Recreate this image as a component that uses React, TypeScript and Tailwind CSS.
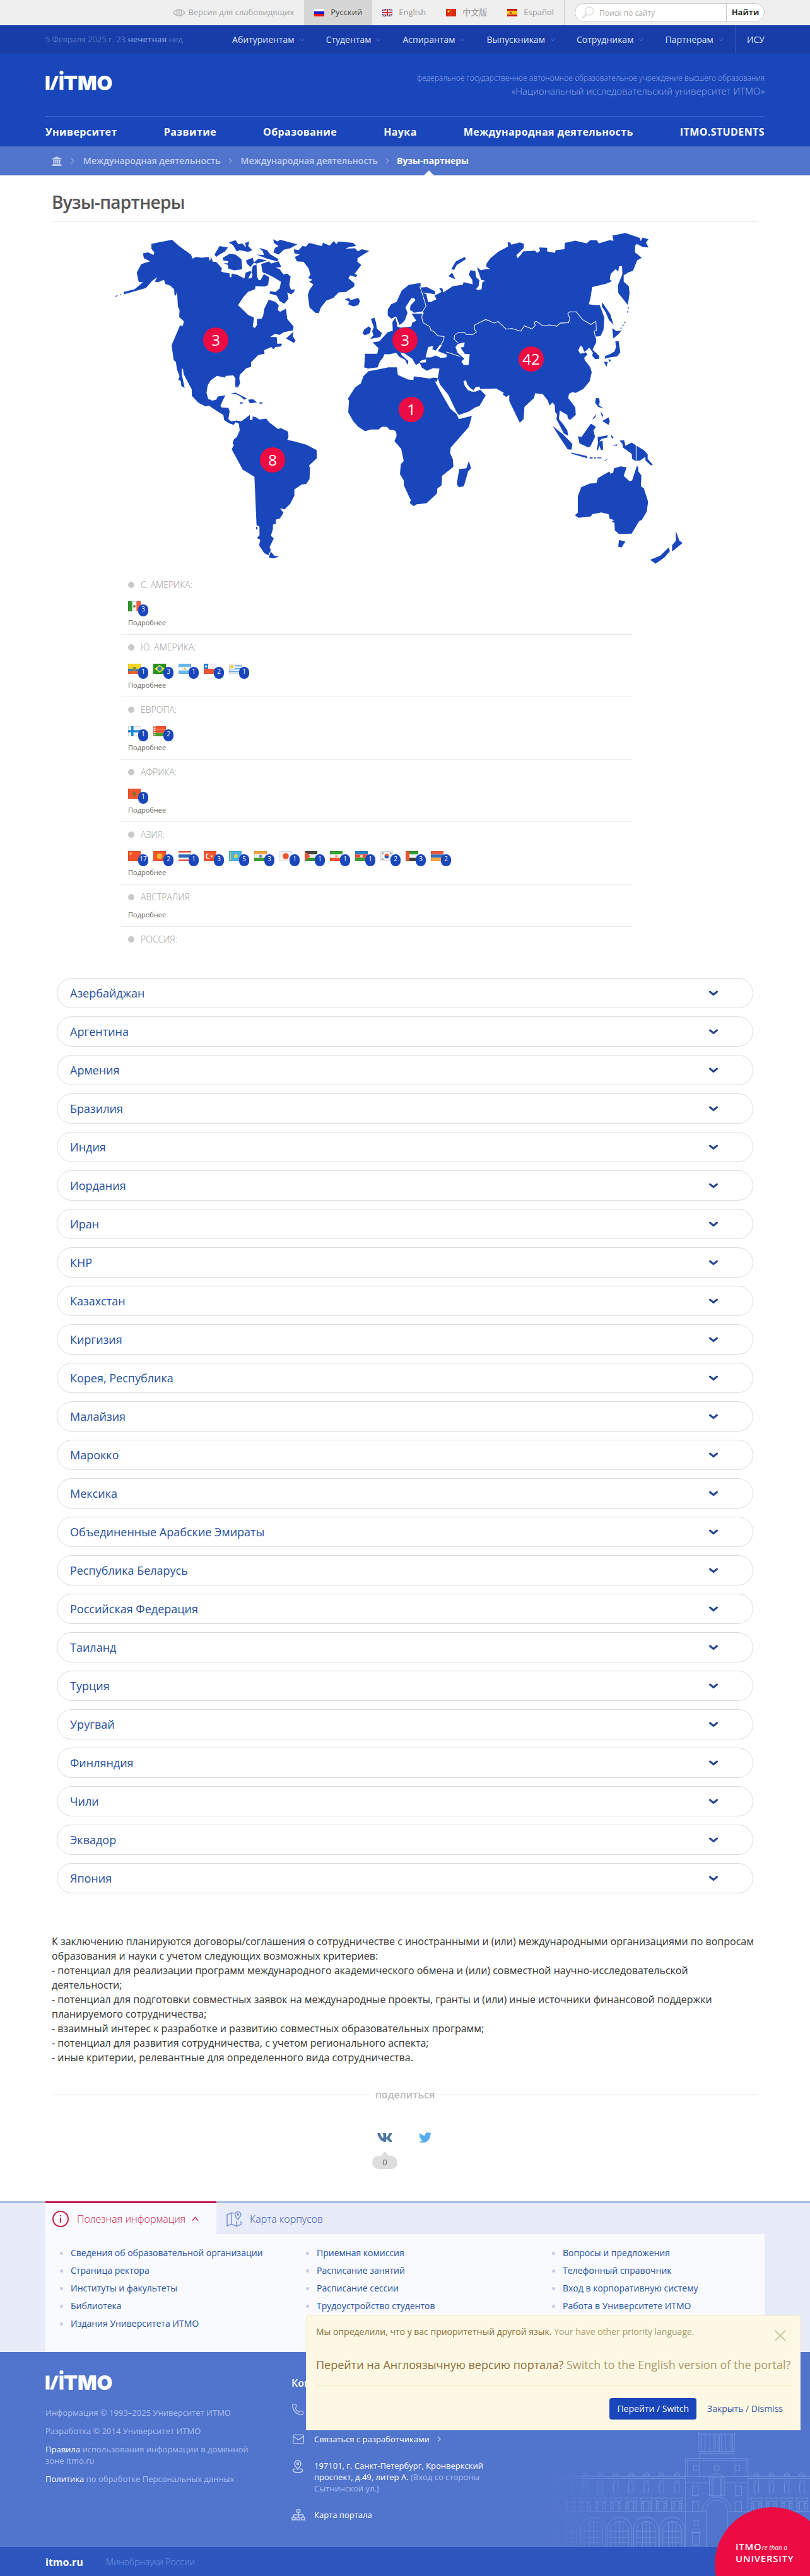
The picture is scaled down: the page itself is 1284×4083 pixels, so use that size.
import { ReactNode } from "react";
import { FaTwitter, FaVk } from "react-icons/fa";
import { Mail, Phone, X } from "lucide-react";

// Types
interface FlagProps {
  stripes: string[];
  vertical?: boolean;
  children?: ReactNode;
}

interface Partner {
  country: string;
  count: number;
  flag: ReactNode;
}

interface Region {
  name: string;
  partners: Partner[];
  more: boolean;
}

const Flag = ({ stripes, vertical, children }: FlagProps) => (
  <svg viewBox="0 0 20 16" className="h-4 w-5" aria-hidden="true">
    {stripes.map((color, i) =>
      vertical ? (
        <rect key={i} x={(20 / stripes.length) * i} y="0" width={20 / stripes.length} height="16" fill={color} />
      ) : (
        <rect key={i} x="0" y={(16 / stripes.length) * i} width="20" height={16 / stripes.length} fill={color} />
      )
    )}
    {children}
    <rect x="0.5" y="0.5" width="19" height="15" fill="none" stroke="#000" strokeOpacity="0.1" />
  </svg>
);

const regions: Region[] = [
  {
    name: "С. Америка:",
    more: true,
    partners: [
      { country: "Мексика", count: 3, flag: <Flag vertical stripes={["#2f9a2f", "#f2f2f2", "#f25c3c"]}><circle cx="10" cy="8" r="2" fill="#8a7a3a" /></Flag> },
    ],
  },
  {
    name: "Ю. Америка:",
    more: true,
    partners: [
      { country: "Эквадор", count: 1, flag: <Flag stripes={["#f9d923", "#f9d923", "#3e86b8", "#f0602c"]}><circle cx="10" cy="8" r="3" fill="#8d8b43" /></Flag> },
      { country: "Бразилия", count: 3, flag: <Flag stripes={["#23951d"]}><path d="M10 2 18 8 10 14 2 8Z" fill="#f2e24a" /><circle cx="10" cy="8" r="3.4" fill="#2d7cb5" /></Flag> },
      { country: "Аргентина", count: 1, flag: <Flag stripes={["#6bb8f0", "#f4f4f4", "#6bb8f0"]}><circle cx="10" cy="8" r="1.8" fill="#e8c75a" /></Flag> },
      { country: "Чили", count: 2, flag: <Flag stripes={["#f1f1f1", "#ee5535"]}><rect width="7" height="8" fill="#2a7fd0" /><circle cx="3.5" cy="4" r="1.5" fill="#fff" /></Flag> },
      { country: "Уругвай", count: 1, flag: <Flag stripes={["#f4f4f4", "#62aee8", "#f4f4f4", "#62aee8", "#f4f4f4", "#62aee8", "#f4f4f4"]}><rect width="9" height="8" fill="#f4f4f4" /><circle cx="4.5" cy="4.5" r="2.8" fill="#f1cf45" /></Flag> },
    ],
  },
  {
    name: "Европа:",
    more: true,
    partners: [
      { country: "Финляндия", count: 1, flag: <Flag stripes={["#f2f4f6"]}><path d="M5 0h3.500v16h-3.500zM0 6.200h20v3.500h-20z" fill="#1d86d2" /></Flag> },
      { country: "Республика Беларусь", count: 2, flag: <Flag stripes={["#f4522f", "#f4522f", "#4f9e2b"]}><path d="M2 0v16" stroke="#f6c9bd" strokeWidth="3" strokeDasharray="2 1" /></Flag> },
    ],
  },
  {
    name: "Африка:",
    more: true,
    partners: [
      { country: "Марокко", count: 1, flag: <Flag stripes={["#f2562e"]}><path d="M10 4.500 12 11 7 7.200h6L8 11Z" fill="none" stroke="#5f7a2a" /></Flag> },
    ],
  },
  {
    name: "Азия:",
    more: true,
    partners: [
      { country: "КНР", count: 17, flag: <Flag stripes={["#f1542c"]}><circle cx="4" cy="4" r="2" fill="#f8b53a" /></Flag> },
      { country: "Киргизия", count: 2, flag: <Flag stripes={["#f1542c"]}><circle cx="10" cy="8" r="4.500" fill="#f7b733" /></Flag> },
      { country: "Таиланд", count: 1, flag: <Flag stripes={["#ee5a3c", "#f2f2f2", "#2c68b5", "#2c68b5", "#f2f2f2", "#ee5a3c"]} /> },
      { country: "Турция", count: 3, flag: <Flag stripes={["#f1542c"]}><circle cx="7" cy="8" r="4" fill="#fff" /><circle cx="8.200" cy="8" r="3.200" fill="#f1542c" /><circle cx="12.500" cy="8" r="1.500" fill="#fff" /></Flag> },
      { country: "Казахстан", count: 5, flag: <Flag stripes={["#4fb2e6"]}><circle cx="11" cy="8" r="3" fill="#d9d64a" /><path d="M2.500 1v14" stroke="#d9d64a" /></Flag> },
      { country: "Индия", count: 3, flag: <Flag stripes={["#f5a742", "#f4f4f4", "#3d9e2e"]}><circle cx="10" cy="8" r="2.200" fill="#4a86b8" /></Flag> },
      { country: "Япония", count: 1, flag: <Flag stripes={["#f3f3f3"]}><circle cx="10" cy="8" r="4.800" fill="#f1542c" /></Flag> },
      { country: "Иордания", count: 1, flag: <Flag stripes={["#444444", "#f1f1f1", "#2f9a2f"]}><path d="M0 0 9 8 0 16Z" fill="#ee5535" /></Flag> },
      { country: "Иран", count: 1, flag: <Flag stripes={["#38a035", "#f4f4f4", "#ee5535"]}><circle cx="10" cy="8" r="1.800" fill="#ee8a70" /></Flag> },
      { country: "Азербайджан", count: 1, flag: <Flag stripes={["#2b80c4", "#ec4c37", "#3f9f35"]}><circle cx="10" cy="8" r="2.200" fill="#f6dcd6" /></Flag> },
      { country: "Корея, Республика", count: 2, flag: <Flag stripes={["#f1f1f1"]}><path d="M6.500 8a3.500 3.500 0 0 1 7 0Z" fill="#ee5535" /><path d="M6.500 8a3.500 3.500 0 0 0 7 0Z" fill="#2f62a8" /><path d="M2.500 4.500 4.500 2.500M15.500 2.500 17.500 4.500M2.500 11.500 4.500 13.500M15.500 13.500 17.500 11.500" stroke="#666" strokeWidth="1.500" /></Flag> },
      { country: "ОАЭ", count: 3, flag: <Flag stripes={["#2f9a2f", "#f3f3f3", "#444444"]}><rect width="6" height="16" fill="#ee5535" /></Flag> },
      { country: "Армения", count: 2, flag: <Flag stripes={["#ee5a3c", "#3a6fba", "#f5a742"]} /> },
    ],
  },
  { name: "Австралия:", more: true, partners: [] },
  { name: "Россия:", more: false, partners: [] },
];

const countries = [
  "Азербайджан", "Аргентина", "Армения", "Бразилия", "Индия", "Иордания", "Иран", "КНР",
  "Казахстан", "Киргизия", "Корея, Республика", "Малайзия", "Марокко", "Мексика",
  "Объединенные Арабские Эмираты", "Республика Беларусь", "Российская Федерация", "Таиланд",
  "Турция", "Уругвай", "Финляндия", "Чили", "Эквадор", "Япония",
];

const audiences = ["Абитуриентам", "Студентам", "Аспирантам", "Выпускникам", "Сотрудникам", "Партнерам"];

const mainMenu = ["Университет", "Развитие", "Образование", "Наука", "Международная деятельность", "ITMO.STUDENTS"];

const usefulLinks = [
  ["Сведения об образовательной организации", "Страница ректора", "Институты и факультеты", "Библиотека", "Издания Университета ИТМО"],
  ["Приемная комиссия", "Расписание занятий", "Расписание сессии", "Трудоустройство студентов"],
  ["Вопросы и предложения", "Телефонный справочник", "Вход в корпоративную систему", "Работа в Университете ИТМО"],
];

const markers = [
  { count: 3, place: "left-[160px] top-[168px]" },
  { count: 8, place: "left-[250px] top-[358px]" },
  { count: 3, place: "left-[460px] top-[168px]" },
  { count: 1, place: "left-[470px] top-[278px]" },
  { count: 42, place: "left-[660px] top-[198px]" },
];

const languages = [
  { name: "Русский", active: true, flag: <FlagRu /> },
  { name: "English", active: false, flag: <FlagEn /> },
  { name: "中文版", active: false, flag: <FlagCn /> },
  { name: "Español", active: false, flag: <FlagEs /> },
];

function FlagRu() {
  return (
    <svg viewBox="0 0 16 12" className="h-3 w-4" aria-hidden="true">
      <rect width="16" height="4" fill="#fff" />
      <rect y="4" width="16" height="4" fill="#1a17c4" />
      <rect y="8" width="16" height="4" fill="#ec1010" />
    </svg>
  );
}

function FlagEn() {
  return (
    <svg viewBox="0 0 16 12" className="h-3 w-4" aria-hidden="true">
      <rect width="16" height="12" fill="#2b3f92" />
      <path d="M0 0 16 12M16 0 0 12" stroke="#f0e6ee" strokeWidth="2.500" />
      <path d="M0 0 16 12M16 0 0 12" stroke="#d3343f" strokeWidth="1" />
      <path d="M8 0v12M0 6h16" stroke="#f5eef2" strokeWidth="4" />
      <path d="M8 0v12M0 6h16" stroke="#d3343f" strokeWidth="2.200" />
    </svg>
  );
}

function FlagCn() {
  return (
    <svg viewBox="0 0 16 12" className="h-3 w-4" aria-hidden="true">
      <rect width="16" height="12" fill="#dd2a12" />
      <circle cx="4" cy="4" r="1.800" fill="#f8d02c" />
      <path d="M7.500 1.500v1M9 3.500v1M9 6v1M7.500 8v1" stroke="#f8d02c" />
    </svg>
  );
}

function FlagEs() {
  return (
    <svg viewBox="0 0 16 12" className="h-3 w-4" aria-hidden="true">
      <rect width="16" height="12" fill="#c81a1a" />
      <rect y="3" width="16" height="6" fill="#fbc60a" />
      <rect x="4" y="4.500" width="3" height="3.500" fill="#b5542a" />
    </svg>
  );
}

const Logo = () => (
  <svg viewBox="0 -8 130 50" className="-mb-[11px] -mt-2 h-[50px] w-[130px]" fill="#fff" role="img" aria-label="ИТМО">
    <rect x="0.500" y="8.500" width="6" height="22" />
    <path d="M15.500 8.500h5.500l-8.500 22h-5.500z" />
    <rect x="22.500" y="8.500" width="6" height="22" />
    <circle cx="25.500" cy="3.200" r="3.100" />
    <text x="29" y="30.500" fontFamily="Inter, sans-serif" fontWeight="900" fontSize="32">TMO</text>
  </svg>
);

const Chevron = ({ className, d = "M1 1 5 6 9 1" }: { className: string; d?: string }) => (
  <svg viewBox="0 0 10 7" className={className} fill="none" stroke="currentColor" strokeWidth="1.200" aria-hidden="true">
    <path d={d} />
  </svg>
);

const ChevronRight = ({ className }: { className: string }) => (
  <svg viewBox="0 0 6 10" className={className} fill="none" stroke="currentColor" strokeWidth="1.200" aria-hidden="true">
    <path d="M1 1 5 5 1 9" />
  </svg>
);

// World map. Land is drawn on a 3 x 2.8 times finer grid, the eastern half is shifted by 1380 units.
const WorldMap = () => (
  <svg viewBox="2 1 960 556" className="h-[556px] w-[960px]" aria-hidden="true">
    <g transform="scale(0.33333 0.35714)" fill="#1946ba">
      {/* Americas */}
      <path d="M240 102 338 84 372 112 428 150 436 168 452 160 480 164 512 160 518 180 524 160 532 182 548 182 575 210 572 226 612 234 612 250 620 250 622 234 650 240 682 256 688 230 712 222 714 232 700 256 716 254 724 228 745 252 750 264 760 262 775 236 800 250 795 285 778 292 735 290 732 304 700 315 680 335 652 374 672 392 700 418 728 430 722 470 732 476 742 462 742 436 764 434 772 420 776 392 798 350 830 360 846 375 840 395 852 404 880 390 886 436 916 468 914 486 870 494 850 506 826 502 805 516 836 516 838 545 862 545 855 558 830 560 820 570 810 560 776 574 778 590 748 596 714 628 714 648 692 654 660 684 658 700 662 722 650 740 640 738 638 720 640 700 630 686 594 688 590 696 552 688 522 708 508 730 502 762 510 790 530 798 548 794 556 780 592 774 578 800 568 822 574 828 606 830 612 845 606 880 618 890 645 886 668 890 708 862 708 884 720 884 722 868 738 872 754 882 786 878 800 894 842 924 856 920 890 936 892 958 886 972 916 978 978 994 1026 1018 1026 1054 990 1086 994 1098 992 1146 976 1168 956 1170 920 1192 920 1220 900 1256 874 1280 852 1276 868 1296 852 1320 832 1326 832 1344 818 1348 818 1368 808 1398 822 1410 802 1448 808 1462 796 1484 776 1474 752 1440 758 1416 742 1408 754 1396 754 1358 740 1350 730 1136 674 1104 622 1014 632 994 626 988 632 970 646 960 660 930 656 900 640 894 632 906 608 898 586 884 582 862 545 840 512 820 498 824 464 808 432 776 432 748 394 682 390 656 384 658 384 678 398 742 382 732 380 712 368 704 374 690 362 660 356 626 346 618 336 552 376 464 390 466 394 446 372 426 374 396 366 380 362 316 356 332 350 330 348 304 330 288 306 280 300 262 272 272 256 270 268 250 244 266 214 298 110 326 108 316 160 304 200 272 180 272 170 230 192 192 234 180 204 166 200 144 225 140 250 152 254 140 240 124Z" />
      {/* Canadian islands, Newfoundland */}
      <path d="M580 164 612 146 640 150 668 170 672 215 634 220 606 212 604 196 584 188 604 188 606 180 582 176ZM540 150 564 112 604 118 590 136 560 152 548 160ZM608 96 640 86 654 104 672 100 690 118 686 98 706 92 700 112 720 130 700 138 660 130 646 136 628 108ZM820 82 840 92 852 84 934 104 900 122 870 128 845 150 820 140 828 120 845 112 822 98ZM752 120 790 130 804 148 845 170 838 180 790 168 740 150 775 152 770 135ZM690 176 722 164 728 186 710 205 694 190ZM726 186 748 168 790 176 740 190ZM722 200 740 194 742 250 715 232ZM762 192 800 180 808 190 845 180 858 205 830 208 850 215 868 238 885 234 902 248 896 285 904 306 922 304 918 316 905 326 886 318 892 346 872 368 850 356 836 332 800 322 806 312 830 316 850 300 856 270 820 250 790 236 768 228ZM880 522 916 492 912 512 926 532 918 542Z" />
      {/* Greenland and Iceland */}
      <path d="M918 126 940 130 958 112 975 114 990 98 1050 112 1056 97 1088 110 1106 90 1120 102 1130 92 1200 98 1214 112 1180 116 1162 124 1208 122 1222 136 1240 126 1276 134 1220 166 1220 182 1238 196 1206 236 1220 240 1212 250 1186 242 1176 254 1206 278 1204 292 1166 316 1130 318 1105 342 1072 354 1046 384 1036 410 1020 408 992 384 984 330 990 310 1010 282 990 270 1006 262 986 254 996 238 988 212 964 182 932 180 922 160 946 150 920 144ZM1160 348 1180 342 1186 352 1224 342 1232 356 1224 374 1200 380 1175 370 1182 360Z" />
      {/* Caribbean, Aleutian and southern islands */}
      <path d="M614 768 640 762 694 788 680 794 668 782 640 768ZM700 794 724 792 742 806 708 810ZM660 806h14v5h-14ZM754 806h14v5h-14ZM68 334 84 328 70 338ZM90 326h8v3h-8ZM808 1468 824 1486 848 1490 820 1498 798 1494ZM738 1358h6v12h-6Z" />
      {/* British Isles */}
      <path d="M1284 436 1300 430 1308 450 1312 478 1336 498 1328 516 1280 524 1296 508 1290 490 1298 472ZM1244 500 1252 482 1274 468 1284 478 1280 498 1256 508Z" />
      <g transform="translate(1380 0)">
        {/* Eurasia */}
        <path d="M140 276 140 296 170 294 208 312 210 326 150 318 168 326 175 360 190 360 216 348 206 332 240 316 228 298 244 300 248 318 294 290 340 284 345 272 388 282 386 262 370 240 376 220 400 222 404 250 420 264 416 290 404 302 412 308 430 304 434 272 448 266 428 262 408 206 428 220 450 214 472 214 452 202 454 190 472 166 512 136 556 114 554 96 566 96 572 106 612 96 632 102 630 122 596 152 600 166 612 156 628 136 684 132 694 142 708 134 704 118 742 120 742 136 780 142 782 130 824 126 826 98 876 88 930 100 946 86 978 86 988 100 1038 86 1058 88 1052 66 1114 54 1184 76 1186 90 1196 74 1224 82 1212 96 1224 118 1196 116 1168 102 1160 112 1160 140 1192 164 1170 176 1150 222 1130 228 1106 242 1106 270 1130 290 1134 320 1126 374 1080 320 1078 288 1100 236 1098 200 1084 202 1080 226 1068 214 1044 236 1040 260 1050 268 1020 280 956 294 948 344 940 370 966 374 992 374 1014 430 1010 484 996 512 974 514 975 540 958 572 990 600 990 612 970 614 956 598 960 586 942 562 930 575 918 582 910 560 900 554 890 576 900 590 926 584 934 592 918 608 922 620 946 648 954 672 944 712 914 746 878 764 862 760 846 768 842 786 876 828 878 862 850 884 840 876 838 862 802 842 798 880 820 905 838 930 842 954 822 944 800 905 786 880 790 860 780 848 778 818 768 806 754 820 744 796 720 768 684 766 680 786 634 826 630 880 612 896 562 800 562 772 548 782 530 770 536 764 500 744 424 746 420 736 402 738 392 752 376 742 362 726 356 708 344 712 350 732 366 752 384 758 402 758 424 750 450 774 420 822 400 828 370 846 322 862 312 850 272 772 232 726 222 696 230 656 200 654 170 666 146 652 136 630 166 628 166 614 136 622 140 628 118 640 100 612 66 590 44 584 50 596 82 622 78 640 66 616 40 604 24 586 -8 592 -32 592 -38 606 -54 625 -64 650 -110 656 -128 650 -124 590 -66 590 -60 565 -88 540 -56 535 -16 494 8 488 6 450 20 430 26 450 30 470 44 474 96 470 100 452 120 444 98 412 156 412 150 402 110 408 90 395 92 376 116 352 108 342 96 344 68 384 78 408 66 440 52 455 40 462 24 425 0 434 -16 420 -16 394 0 370 26 360 50 310 84 284Z" />
        {/* Africa and Madagascar */}
        <path d="M222 698 200 696 184 700 108 690 106 706 80 704 32 684 28 650 -14 650 -64 660 -108 668 -132 690 -144 722 -172 740 -206 790 -200 798 -204 850 -180 890 -156 914 -124 934 -96 926 -60 926 -44 914 -20 914 -6 928 12 928 24 936 26 955 16 978 48 1012 60 1066 46 1080 42 1124 60 1152 60 1172 86 1226 94 1240 88 1252 108 1266 122 1258 168 1254 218 1210 220 1188 240 1174 242 1132 296 1092 294 1060 280 1030 284 1006 370 914 384 866 322 880 312 858 280 832 236 760 208 712 218 714ZM370 1066 380 1098 366 1112 346 1178 322 1182 312 1168 324 1102 358 1098Z" />
        {/* Arctic islands, Sakhalin, Japan */}
        <path d="M350 160 356 170 312 196 300 218 286 214 308 180ZM272 246 290 230 306 260ZM1004 362 1042 414 1058 462 1036 440 1020 405 1002 380ZM1052 476 1072 490 1096 486 1080 504 1056 522ZM1066 534 1082 534 1090 584 1074 602 1040 606 1016 612 1018 600 1044 590 1062 580 1070 560ZM1012 626 1030 626 1024 648ZM1034 614 1046 618 1036 628Z" />
        <path d="M1128 384 1124 412M1114 448 1092 480" fill="none" stroke="#1946ba" strokeWidth="4" strokeDasharray="8 8" />
        {/* South-East Asia */}
        <path d="M974 786 990 788 992 806 988 818 1010 832 985 826 970 808ZM996 848 1008 860 1004 874ZM956 882 976 856 970 874ZM1004 888 1034 872 1040 890 1034 906ZM768 910 820 950 862 990 858 1016 840 1014 800 958ZM856 1028 930 1044 934 1054 860 1034ZM1008 1066 1036 1054 1020 1064ZM944 1050h14v5h-14ZM966 1050h8v5h-8ZM980 1050h20v4h-20ZM888 956 905 960 950 900 974 914 962 930 970 958 948 1000 938 1006 896 988ZM982 960 1030 952 1028 962 1000 968 990 980 1006 976 1008 1016 998 1018 990 996 984 1018 978 1016 984 985ZM1044 948 1058 962 1050 966ZM1050 996 1076 992 1074 998ZM1086 976 1108 974 1114 998 1144 984 1164 996 1202 1018 1220 1036 1220 1056 1244 1082 1236 1086 1210 1064 1208 1048 1184 1064 1162 1066 1146 1056 1144 1034 1102 1006 1100 990Z" />
        {/* Australia and New Zealand */}
        <path d="M888 1222 904 1182 944 1166 976 1164 984 1142 1038 1112 1042 1122 1056 1118 1060 1098 1090 1090 1120 1094 1106 1132 1134 1156 1146 1152 1168 1090 1174 1090 1176 1112 1190 1130 1188 1178 1202 1188 1222 1246 1216 1290 1192 1328 1180 1332 1144 1388 1084 1390 1064 1374 1062 1340 1048 1336 1060 1328 1040 1322 1034 1302 1000 1294 956 1302 950 1312 890 1318 874 1306 888 1296ZM1084 1416 1114 1424 1096 1450 1080 1446ZM1354 1376 1370 1418 1386 1430 1336 1468 1336 1440 1354 1420ZM1320 1450 1326 1466 1300 1494 1258 1522 1232 1504 1280 1486Z" />
        {/* Inner seas */}
        <path fill="#fff" d="M164 606 176 560 200 556 196 570 212 576 232 550 242 552 222 578 266 594 262 606 236 608 212 598 190 606ZM306 560 318 546 350 540 346 560 330 562 350 590 374 592 368 640 345 640 334 625 348 612 316 585Z" />
        {/* Russian border */}
        <path
          fill="none"
          stroke="#fff"
          strokeWidth="3"
          d="M136 290 146 318 166 378 150 402 146 430 152 452 184 470 190 488 202 490 222 510 252 514 250 530 236 550M262 582 328 602M318 542 300 526 302 508 322 494 350 496 356 504 386 506 406 494 396 480 398 462 450 438 492 454 508 446 546 480 576 478 616 490 634 466 670 480 686 464 680 450 690 446 722 466 752 462 788 468 804 454 844 452 850 432 840 412 848 404 880 404 910 438 950 460 974 446 976 486 966 490 972 520M1165 994V1068"
        />
      </g>
    </g>
  </svg>
);

// Line drawing of the university building behind the footer
const Building = () => (
  <svg viewBox="218 382 424 184" className="absolute bottom-0 right-0 h-[184px] w-[424px]" aria-hidden="true">
    <defs>
      <linearGradient id="fade" x1="0" x2="1" y1="0" y2="0">
        <stop offset="0" stopColor="#fff" stopOpacity="0" />
        <stop offset="0.350" stopColor="#fff" stopOpacity="1" />
      </linearGradient>
      <mask id="fadeMask" maskUnits="userSpaceOnUse" x="218" y="382" width="424" height="184">
        <rect x="218" y="382" width="424" height="184" fill="url(#fade)" />
      </mask>
    </defs>
    <g mask="url(#fadeMask)">
      <g transform="scale(0.4095 0.391)" fill="none" stroke="#7592de" strokeWidth="2.200">
        <path d="M1138 977V1060M1275 977V1060M1136 990H1277M1136 1060H1277M1138 1068H1275M1140 1068V1088M1274 1068V1088M1148 990V1060M1162 990V1060M1180 990V1060M1196 990V1060M1202 990V1060M1212 990V1060M1218 990V1060M1226 990V1060M1240 990V1060M1262 990V1060M1268 990V1060" />
        <path d="M1085 1448V1088H1328V1300M1085 1096H1328M1094 1096V1160M1320 1096V1160M1140 1096V1160M1274 1096V1160M1085 1162H1328M1085 1187H1178M1236 1187H1328M1178 1240V1162L1206 1148 1236 1162V1240ZM1178 1166H1236M1188 1168V1240M1226 1168V1240M1192 1168V1240M1222 1168V1240" />
        <path d="M1117 1116h18v22h-18ZM1198 1116h18v20h-18ZM1278 1116h18v22h-18ZM1112 1200h23v40h-23ZM1278 1200h25v40h-25ZM1112 1262h23v42h-23ZM1278 1262h25v42h-25ZM1119 1338h16v24h-16ZM1112 1390h28v50h-28ZM1106 1388C1106 1370 1146 1370 1146 1388Z" />
        <path d="M1166 1448V1302C1166 1244 1248 1244 1248 1302V1448M1152 1302C1152 1226 1262 1226 1262 1302M1085 1304H1166M1248 1304H1570M540 1304H1085M540 1162H1085M540 1170H1085M1328 1162H1570M1328 1170H1570" />
        {[580, 639, 697, 756, 816, 875, 934, 993, 1052, 1360, 1419, 1478, 1537].map((x) => (
          <g key={x} transform={`translate(${x} 0)`}>
            <path d="M-9 1162V1152C-9 1146 9 1146 9 1152V1162M-12 1156H12M-9 1229V1188H9V1229ZM-12 1184C-6 1178 6 1178 12 1184" />
            <path d="M-24 1248H-10L0 1254 10 1248H24L18 1262H-18ZM-10 1262V1298H10V1262M-20 1262V1302H-10M20 1262V1302H10M-20 1272h10M-20 1282h10M-20 1292h10M10 1272h10M10 1282h10M10 1292h10" />
          </g>
        ))}
        {[630, 729, 830, 933, 1034].map((x) => (
          <g key={x} transform={`translate(${x} 0)`}>
            <path d="M-48 1448V1378C-48 1310 48 1310 48 1378V1448M-36 1448V1384C-36 1330 36 1330 36 1384V1448M-36 1384H36M-36 1410H36M-36 1428H36M-14 1348V1448M14 1348V1448M0 1344V1448" />
          </g>
        ))}
      </g>
    </g>
  </svg>
);

export default function App() {
  return (
    <div className="relative overflow-hidden bg-white font-['Open_Sans','Noto_Sans_CJK_SC',sans-serif] text-[#333]">
      {/* Language and search bar */}
      <div className="bg-[#efefef] text-[13px]">
        <div className="mx-auto flex h-10 max-w-[1170px] items-center justify-end px-[15px]">
          <a href="#" className="mr-4 flex items-center gap-1 text-[#a3a3a3]">
            <svg viewBox="0 0 20 12" className="h-3 w-5" fill="none" stroke="#bbb" strokeWidth="1.500" aria-hidden="true">
              <path d="M1 6C5-.5 15-.5 19 6 15 12.500 5 12.500 1 6Z" />
              <circle cx="10" cy="6" r="4" />
              <circle cx="10" cy="6" r="1" fill="#bbb" />
            </svg>
            Версия для слабовидящих
          </a>
          {languages.map((lang) => (
            <a
              key={lang.name}
              href="#"
              className={`flex h-10 items-center gap-2.5 px-4 ${lang.active ? "bg-[#d6d6d6] text-[#444]" : "text-[#999]"}`}
            >
              {lang.flag}
              {lang.name}
            </a>
          ))}
          <form className="flex h-10 items-center border-l border-[#ccc] pl-4">
            <div className="flex h-[30px] items-center rounded-full border border-[#ccc] bg-white">
              <svg viewBox="0 0 20 20" className="ml-[10px] h-5 w-5" fill="none" stroke="#ddd" strokeWidth="1.500" aria-hidden="true">
                <circle cx="12" cy="7.500" r="6.500" />
                <path d="M7.500 12.500 1 19" strokeWidth="2.500" />
              </svg>
              <input
                type="text"
                aria-label="Поиск по сайту"
                placeholder="Поиск по сайту"
                className="h-7 w-[209px] bg-transparent px-2 text-xs outline-none placeholder:text-[#aaa]"
              />
              <button type="submit" className="h-7 w-[60px] border-l border-[#ccc] text-[13px] font-bold text-[#333]">
                Найти
              </button>
            </div>
          </form>
        </div>
      </div>

      {/* Audience menu */}
      <div className="bg-[#183da8]">
        <div className="mx-auto flex h-[45px] max-w-[1170px] items-center justify-between px-[15px]">
          <span className="text-[13px] font-light text-[#7c96dd]">
            5 Февраля 2025 г. 23 <b className="font-semibold">нечетная</b> нед.
          </span>
          <nav className="flex items-center gap-[34px] text-sm text-[#dbe4fa]">
            {audiences.map((item) => (
              <a key={item} href="#" className="flex items-center gap-2">
                {item}
                <Chevron className="h-1.5 w-2 text-[#4a6cc9]" />
              </a>
            ))}
            <a href="#" className="-ml-4 flex h-[45px] items-center border-l border-[#3558bb] pl-[18px]">
              ИСУ
            </a>
          </nav>
        </div>
      </div>

      {/* Header */}
      <header className="bg-[#1946ba]">
        <div className="mx-auto max-w-[1170px] px-[15px]">
          <div className="flex h-[99px] items-start justify-between pt-[27px]">
            <a href="#">
              <Logo />
            </a>
            <p className="text-right text-[15px] font-light leading-5 text-[#93abe9]">
              <span className="text-xs leading-5">федеральное государственное автономное образовательное учреждение высшего образования</span>
              <br />
              «Национальный исследовательский университет ИТМО»
            </p>
          </div>
          <nav className="flex h-12 items-center justify-between border-t border-[#3a62cb] text-base font-bold tracking-wide text-white">
            {mainMenu.map((item) => (
              <a key={item} href="#">
                {item}
              </a>
            ))}
          </nav>
        </div>
      </header>

      {/* Breadcrumbs */}
      <nav className="bg-[#5174cc]">
        <div className="mx-auto flex h-[46px] max-w-[1170px] items-center px-[25px] text-sm font-semibold text-[#c3d1f6]">
          <a href="#" aria-label="Главная">
            <svg viewBox="0 0 16 15" className="h-[15px] w-4" fill="currentColor" aria-hidden="true">
              <path d="M8 0 15.500 3.500V4.500H.500V3.500ZM2 5.500H14V6.500H2ZM2.500 6.500H4.500V11.500H2.500ZM5.500 6.500H7.500V11.500H5.500ZM8.500 6.500H10.500V11.500H8.500ZM11.500 6.500H13.500V11.500H11.500ZM1.500 12H14.500V13H1.500ZM.500 13.500H15.500V15H.500Z" />
            </svg>
          </a>
          <ChevronRight className="mx-[14px] h-2.5 w-1.5 text-[#8fa7e2]" />
          <a href="#">Международная деятельность</a>
          <ChevronRight className="mx-[13px] h-2.5 w-1.5 text-[#8fa7e2]" />
          <a href="#">Международная деятельность</a>
          <ChevronRight className="mx-[12px] h-2.5 w-1.5 text-[#8fa7e2]" />
          <span className="relative flex h-[46px] items-center font-bold text-white">
            Вузы-партнеры
            <svg viewBox="0 0 16 8" className="absolute bottom-0 left-[43px] h-2 w-4" fill="#fff" aria-hidden="true">
              <path d="M0 8 8 0 16 8Z" />
            </svg>
          </span>
        </div>
      </nav>

      <main className="mx-auto max-w-[1170px] px-[25px]">
        <h1 className="flex h-[73px] items-center border-b border-[#ddd] pt-3 text-[28px] font-semibold tracking-tight text-[#555]">
          Вузы-партнеры
        </h1>

        {/* Map */}
        <div className="relative mx-auto h-[556px] w-[960px]">
          <WorldMap />
          {markers.map((marker) => (
            <button
              key={marker.place}
              type="button"
              className={`absolute flex size-10 items-center justify-center rounded-full bg-[#ec0b43] text-2xl text-white ${marker.place}`}
            >
              {marker.count}
            </button>
          ))}
        </div>

        {/* Regions */}
        <div className="mb-[51px] ml-[110px] mr-[200px]">
          {regions.map((region) => (
            <section key={region.name} className="border-b border-[#e9e9e9] px-[11px] pt-2.5 last:border-b-0">
              <h2 className="flex h-5 items-center gap-[10px] text-sm font-light uppercase text-[#999]">
                <i className="block size-2.5 rounded-full bg-[#c9c9c9]" />
                {region.name}
              </h2>
              {region.partners.length > 0 && (
                <ul className="mt-4 flex h-4 gap-5">
                  {region.partners.map((partner) => (
                    <li key={partner.country} className="relative w-5" title={partner.country}>
                      {partner.flag}
                      <span className="absolute left-4 top-[5px] flex h-[19px] w-4 items-center justify-center rounded-full bg-[#1946ba] pb-1 text-[10px] text-white">
                        {partner.count}
                      </span>
                    </li>
                  ))}
                </ul>
              )}
              {region.more && (
                <a href="#" className="mt-2.5 block pb-2.5 text-[11px] leading-4 text-[#666]">
                  Подробнее
                </a>
              )}
            </section>
          ))}
        </div>

        {/* Countries */}
        <div className="mb-[65px] flex flex-col gap-[13px] px-2">
          {countries.map((country) => (
            <button
              key={country}
              type="button"
              className="flex h-12 items-center justify-between rounded-full border border-[#d9dcde] pl-5 pr-[55px] text-lg text-[#274f9e]"
            >
              {country}
              <svg viewBox="0 0 14 9" className="h-[9px] w-3.5" fill="none" stroke="#274690" strokeWidth="3" strokeLinecap="round" aria-hidden="true">
                <path d="M1.500 2 7 6.500 12.500 2" />
              </svg>
            </button>
          ))}
        </div>

        <p className="text-base leading-[23px]">
          К заключению планируются договоры/соглашения о сотрудничестве с иностранными и (или) международными организациями по вопросам образования и науки с учетом следующих возможных критериев:
          <br />- потенциал для реализации программ международного академического обмена и (или) совместной научно-исследовательской деятельности;
          <br />- потенциал для подготовки совместных заявок на международные проекты, гранты и (или) иные источники финансовой поддержки планируемого сотрудничества;
          <br />- взаимный интерес к разработке и развитию совместных образовательных программ;
          <br />- потенциал для развития сотрудничества, с учетом регионального аспекта;
          <br />- иные критерии, релевантные для определенного вида сотрудничества.
        </p>

        {/* Share */}
        <div className="mt-[35px] flex h-6 items-center gap-2 font-semibold text-[#bbb]">
          <span className="h-px flex-1 bg-[#ddd]" />
          поделиться
          <span className="h-px flex-1 bg-[#ddd]" />
        </div>
        <div className="mb-[51px] mt-[46px] flex justify-center">
          <a href="#" aria-label="ВКонтакте" className="flex w-16 flex-col items-center text-[#4d75a3]">
            <FaVk className="size-5 scale-125" />
            <svg viewBox="0 0 40 7" className="mt-3 h-[7px] w-10" fill="#ddd" aria-hidden="true">
              <path d="M14 7 20 0 26 7Z" />
            </svg>
            <span className="flex h-[21px] w-10 items-center justify-center rounded-full bg-[#ddd] text-[13px] text-[#666]">0</span>
          </a>
          <a href="#" aria-label="Twitter" className="flex w-16 justify-center text-[#55acee]">
            <FaTwitter className="size-5" />
          </a>
        </div>
      </main>

      {/* Useful information */}
      <section className="border-t-[3px] border-[#a9bce0] bg-[#e8ecf8]">
        <div className="mx-auto max-w-[1170px] px-[15px]">
          <div className="flex h-[49px] text-base">
            <button type="button" className="-mt-[3px] flex h-[52px] w-[271px] items-center gap-[13px] border-t-[3px] border-[#c41e4a] bg-[#fafbfe] pl-[11px] font-light text-[#c41e4a]">
              <svg viewBox="0 0 26 26" className="h-[26px] w-[26px]" fill="none" stroke="currentColor" strokeWidth="2" aria-hidden="true">
                <circle cx="13" cy="13" r="12" />
                <path d="M13 11v8M13 7v2" />
              </svg>
              Полезная информация
              <Chevron className="-ml-[3px] h-2 w-[11px]" d="M1 6 5 1 9 6" />
            </button>
            <button type="button" className="flex items-center gap-[13px] pl-4 font-light text-[#2f52bb]">
              <svg viewBox="0 0 24 26" className="h-[26px] w-6" fill="none" stroke="#8499dc" strokeWidth="1.700" aria-hidden="true">
                <path d="M12 4 8 3.500 1 6V24L8 21.500 16 24.500 23 22V17M8 3.500V21.500M16 24.500V17" />
                <path d="M18 14C14.500 9.500 13.500 8.500 13.500 6A4.700 5 0 0 1 22.800 6C22.800 8.500 21.500 9.500 18 14Z" />
                <circle cx="18" cy="6" r="1.200" />
              </svg>
              Карта корпусов
            </button>
          </div>
          <div className="grid grid-cols-3 gap-x-[30px] bg-[#f8fafe] pb-[31px] pt-4">
            {usefulLinks.map((links) => (
              <ul key={links[0]} className="pl-[23px] text-sm leading-7 text-[#24509e]">
                {links.map((link) => (
                  <li key={link} className="flex items-center gap-3">
                    <i className="block size-[5px] rounded-full bg-[#c9cdec]" />
                    <a href="#">{link}</a>
                  </li>
                ))}
              </ul>
            ))}
          </div>
        </div>
      </section>

      {/* Footer */}
      <footer className="relative bg-[#5174cc] text-[13px] leading-[18px] text-[#a9bff2]">
        <Building />
        <div className="mx-auto grid max-w-[1170px] grid-cols-3 gap-x-[30px] px-[15px] pb-[42px]">
          <div className="flex flex-col gap-[11px] pt-[29px]">
            <a href="#" className="mb-4">
              <Logo />
            </a>
            <p>Информация © 1993–2025 Университет ИТМО</p>
            <p>Разработка © 2014 Университет ИТМО</p>
            <p>
              <a href="#" className="text-white">Правила</a> использования информации в доменной
              <br />
              зоне itmo.ru
            </p>
            <p>
              <a href="#" className="text-white">Политика</a> по обработке Персональных данных
            </p>
          </div>
          <div className="pt-[39px] text-white">
            <h3 className="text-base font-semibold leading-5">Контакты</h3>
            <ul className="mt-[22px] flex flex-col gap-6">
              <li className="mb-1 flex gap-4">
                <Phone className="size-5 text-[#c7d5f8]" strokeWidth={1.5} />
              </li>
              <li className="flex items-center gap-[14px]">
                <Mail className="-my-1 h-5 w-[22px] text-[#c7d5f8]" strokeWidth={1.5} />
                <a href="#" className="flex items-center gap-3">
                  Связаться с разработчиками
                  <ChevronRight className="h-2.5 w-1.5 text-[#c7d5f8]" />
                </a>
              </li>
              <li className="flex gap-4">
                <svg viewBox="0 0 20 21" className="h-[21px] w-5 shrink-0" fill="none" stroke="#c7d5f8" strokeWidth="1.500" aria-hidden="true">
                  <path d="M10 15C6 10 5 8 5 6A5 5 0 0 1 15 6C15 8 14 10 10 15ZM6 14C-1 16 3 20 10 20S21 16 14 14" />
                  <circle cx="10" cy="6" r="1.500" />
                </svg>
                <p>
                  197101, г. Санкт-Петербург, Кронверкский
                  <br />
                  проспект, д.49, литер А. <span className="text-[#a9bff2]">(Вход со стороны</span>
                  <br />
                  <span className="text-[#a9bff2]">Сытнинской ул.)</span>
                </p>
              </li>
              <li className="flex items-center gap-[14px]">
                <svg viewBox="0 0 22 18" className="h-[18px] w-[22px]" fill="none" stroke="#c7d5f8" strokeWidth="1.500" aria-hidden="true">
                  <path d="M8.500 1h5v4h-5ZM1 13h5v4h-5ZM8.500 13h5v4h-5ZM16 13h5v4h-5ZM11 5v8M3.500 13V9h15v4" />
                </svg>
                <a href="#">Карта портала</a>
              </li>
            </ul>
          </div>
        </div>

        {/* Language suggestion */}
        <aside className="absolute -top-[58px] right-[15px] h-[182px] w-[784px] rounded-t border border-b-0 border-[#faebcc] bg-[#fcf8e3] px-[15px] text-[#8a6d3b]">
          <p className="pt-[15px] text-sm leading-5">
            Мы определили, что у вас приоритетный другой язык. <span className="text-[#aa9970]">Your have other priority language.</span>
          </p>
          <button type="button" aria-label="Закрыть" className="absolute right-4 top-4 text-[#cfc8a8]">
            <X className="size-[30px]" strokeWidth={1.5} />
          </button>
          <p className="mt-[30px] whitespace-nowrap border-b border-[#f3e5b8] pb-5 text-lg leading-6">
            Перейти на Англоязычную версию портала? <span className="text-[#aa9970]">Switch to the English version of the portal?</span>
          </p>
          <div className="mt-5 flex justify-end gap-[17px] pr-3 text-sm">
            <button type="button" className="h-[34px] rounded bg-[#1946ba] px-3 text-white">
              Перейти / Switch
            </button>
            <button type="button" className="text-[#3656a5]">
              Закрыть / Dismiss
            </button>
          </div>
        </aside>
      </footer>

      <div className="bg-[#2d57bf]">
        <div className="mx-auto flex h-[47px] max-w-[1170px] items-center gap-9 px-[15px]">
          <a href="#" className="text-base font-bold text-white">itmo.ru</a>
          <a href="#" className="text-sm font-light text-[#7896e2]">Минобрнауки России</a>
        </div>
      </div>

      <div className="absolute -bottom-[72px] -right-[31px] size-[182px] whitespace-nowrap rounded-full bg-[#ec0b43] pl-[33px] pt-[54px] text-[15px] font-semibold leading-[17px] tracking-wider text-white">
        ITMO<span className="text-[10px] font-normal italic tracking-normal">re than a</span>
        <br />
        UNIVERSITY
      </div>
    </div>
  );
}
